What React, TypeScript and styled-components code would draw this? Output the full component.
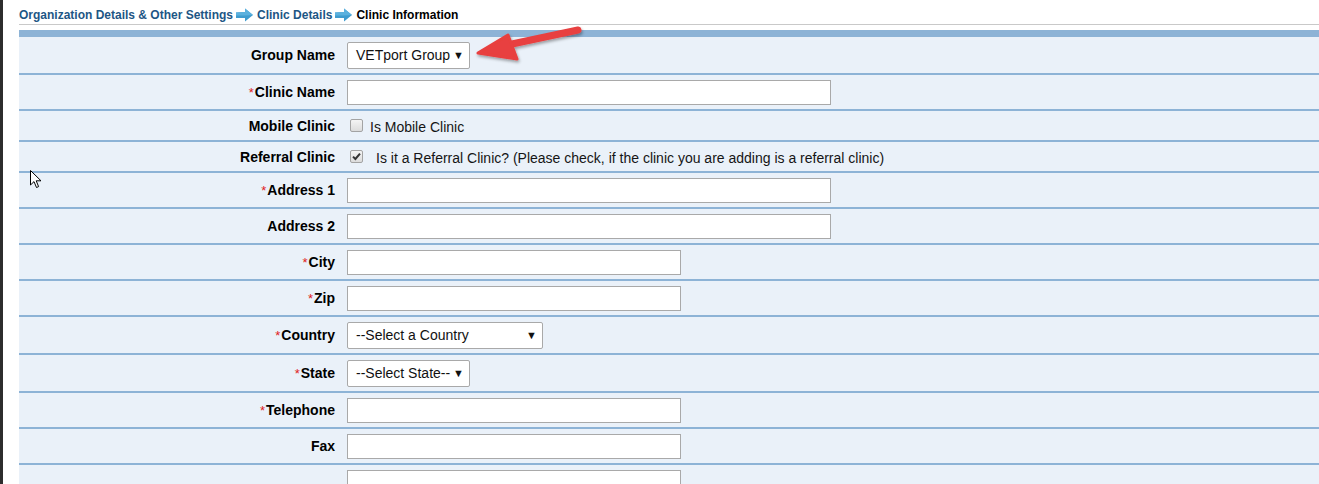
import React from 'react';
import styled, { createGlobalStyle } from 'styled-components';

const GlobalStyle = createGlobalStyle`
  html, body {
    margin: 0;
    padding: 0;
    background: #ffffff;
    overflow: hidden;
  }
  body {
    font-family: "Liberation Sans", Arial, sans-serif;
  }
`;

const Page = styled.div`
  position: relative;
  display: flex;
  width: 1319px;
  height: 484px;
  overflow: hidden;
`;

const Strip = styled.div`
  width: 3px;
  flex: none;
  background: #2d2d2d;
`;

const Main = styled.div`
  flex: 1;
  padding-left: 16px;
  display: flex;
  flex-direction: column;
  min-height: 0;
`;

const Breadcrumb = styled.div`
  flex: none;
  height: 25px;
  border-bottom: 1px solid #c9c9c9;
  display: flex;
  align-items: center;
  padding-top: 5px;
  box-sizing: border-box;
  font-size: 12px;
  font-weight: 700;
  color: #1d5685;
`;

const Crumb = styled.span<{ $current?: boolean }>`
  color: ${(p) => (p.$current ? '#000000' : '#1d5685')};
  white-space: nowrap;
`;

const CrumbArrow = styled.svg`
  margin: 1px 4px 0 3px;
  flex: none;
`;

const HeaderBar = styled.div`
  flex: none;
  margin-top: 5px;
  height: 7px;
  background: #8db3d6;
`;

const Form = styled.div`
  background: #eaf1f9;
  flex: 1;
  min-height: 0;
  overflow: hidden;
`;

const Row = styled.div<{ $h: number }>`
  display: grid;
  grid-template-columns: 328px 1fr;
  align-items: center;
  height: ${(p) => p.$h}px;
  border-bottom: 2px solid #8db3d6;
`;

const Label = styled.div`
  text-align: right;
  padding-right: 12px;
  font-size: 14px;
  font-weight: 700;
  color: #000000;
`;

const Req = styled.span`
  color: #e02020;
  font-weight: 400;
  font-size: 13px;
  margin-right: 1px;
`;

const Field = styled.div`
  display: flex;
  align-items: center;
`;

const TextBox = styled.div<{ $w: number }>`
  width: ${(p) => p.$w}px;
  height: 25px;
  box-sizing: border-box;
  background: #ffffff;
  border: 1px solid #a9a9a9;
`;

const SelectBox = styled.div<{ $w: number }>`
  width: ${(p) => p.$w}px;
  height: 27px;
  box-sizing: border-box;
  background: #ffffff;
  border: 1px solid #a9a9a9;
  border-radius: 2px;
  display: flex;
  align-items: center;
  justify-content: space-between;
  padding: 0 5px 0 8px;
  font-size: 14px;
  color: #111111;
`;

const Caret = styled.span`
  font-size: 11px;
  color: #111111;
`;

const CheckField = styled.div<{ $gap: number }>`
  display: flex;
  align-items: center;
  gap: ${(p) => p.$gap}px;
  padding-left: 3px;
  font-size: 14px;
  color: #151515;
`;

const Check = styled.span`
  width: 13px;
  height: 13px;
  box-sizing: border-box;
  border: 1px solid #a3a3a3;
  border-radius: 2px;
  background: linear-gradient(#f4f4f4, #dcdcdc);
  display: flex;
  align-items: center;
  justify-content: center;
  margin-top: -1px;
`;

const CheckText = styled.span`
  margin-top: 2px;
`;

const Overlay = styled.svg`
  position: absolute;
  pointer-events: none;
`;

const Arrow = () => (
  <CrumbArrow width="17" height="14" viewBox="0 0 17 14">
    <path d="M0 4.5 L9 4 L9 0.5 L17 7 L9 13.5 L9 10 L0 10 Z" fill="#3f9ccf" />
    <path d="M0 4.5 L9 4 L9 0.5 L17 7 L9 7.5 L0 7.5 Z" fill="#5bb1de" />
  </CrumbArrow>
);

const Checkbox = ({ checked }: { checked?: boolean }) => (
  <Check>
    {checked && (
      <svg width="9" height="9" viewBox="0 0 9 9">
        <path d="M1 4.6 L3.4 7 L8 1.6" fill="none" stroke="#333" strokeWidth="2" />
      </svg>
    )}
  </Check>
);

type RowDef =
  | { kind: 'text'; label: string; req?: boolean; w: number }
  | { kind: 'select'; label: string; req?: boolean; w: number; value: string };

const rows: RowDef[] = [
  { kind: 'text', label: 'Address 1', req: true, w: 484 },
  { kind: 'text', label: 'Address 2', w: 484 },
  { kind: 'text', label: 'City', req: true, w: 334 },
  { kind: 'text', label: 'Zip', req: true, w: 334 },
  { kind: 'select', label: 'Country', req: true, w: 196, value: '--Select a Country' },
  { kind: 'select', label: 'State', req: true, w: 123, value: '--Select State--' },
  { kind: 'text', label: 'Telephone', req: true, w: 334 },
  { kind: 'text', label: 'Fax', w: 334 },
];

const FormRow = ({ row }: { row: RowDef }) => (
  <Row $h={row.kind === 'select' ? 36 : 34}>
    <Label>
      {row.req && <Req>*</Req>}
      {row.label}
    </Label>
    <Field>
      {row.kind === 'select' ? (
        <SelectBox $w={row.w}>
          {row.value}
          <Caret>▼</Caret>
        </SelectBox>
      ) : (
        <TextBox $w={row.w} />
      )}
    </Field>
  </Row>
);

const App = () => (
  <Page>
    <GlobalStyle />
    <Strip />
    <Main>
      <Breadcrumb>
        <Crumb>Organization Details &amp; Other Settings</Crumb>
        <Arrow />
        <Crumb>Clinic Details</Crumb>
        <Arrow />
        <Crumb $current>Clinic Information</Crumb>
      </Breadcrumb>
      <HeaderBar />
      <Form>
        <Row $h={36}>
          <Label>Group Name</Label>
          <Field>
            <SelectBox $w={123}>
              VETport Group
              <Caret>▼</Caret>
            </SelectBox>
          </Field>
        </Row>
        <Row $h={34}>
          <Label>
            <Req>*</Req>Clinic Name
          </Label>
          <Field>
            <TextBox $w={484} />
          </Field>
        </Row>
        <Row $h={29}>
          <Label>Mobile Clinic</Label>
          <CheckField $gap={7}>
            <Checkbox />
            <CheckText>Is Mobile Clinic</CheckText>
          </CheckField>
        </Row>
        <Row $h={29}>
          <Label>Referral Clinic</Label>
          <CheckField $gap={13}>
            <Checkbox checked />
            <CheckText>
              Is it a Referral Clinic? (Please check, if the clinic you are adding is a referral clinic)
            </CheckText>
          </CheckField>
        </Row>
        {rows.map((r) => (
          <FormRow key={r.label} row={r} />
        ))}
        <Row $h={34}>
          <Label />
          <Field>
            <TextBox $w={334} />
          </Field>
        </Row>
      </Form>
    </Main>

    {/* red annotation arrow */}
    <Overlay width="130" height="50" viewBox="0 0 130 50" style={{ left: 470, top: 22 }}>
      <defs>
        <filter id="sh" x="-20%" y="-40%" width="140%" height="180%">
          <feDropShadow dx="1" dy="2" stdDeviation="1.5" floodColor="#000" floodOpacity="0.35" />
        </filter>
      </defs>
      <g filter="url(#sh)">
        <path d="M108 8 L42 22" stroke="#e8403f" strokeWidth="7" strokeLinecap="round" />
        <path d="M8 31 L38 13 L47 37 Z" fill="#e8403f" stroke="#e8403f" strokeWidth="3" strokeLinejoin="round" />
      </g>
    </Overlay>

    {/* mouse cursor */}
    <Overlay width="12" height="19" viewBox="0 0 12 19" style={{ left: 30, top: 170 }}>
      <path d="M0.5 0.5 L0.5 15 L4 11.6 L6.5 17.5 L8.6 16.6 L6.2 10.8 L11 10.8 Z" fill="#ffffff" stroke="#000" strokeWidth="1" strokeLinejoin="round" />
    </Overlay>
  </Page>
);

export default App;
